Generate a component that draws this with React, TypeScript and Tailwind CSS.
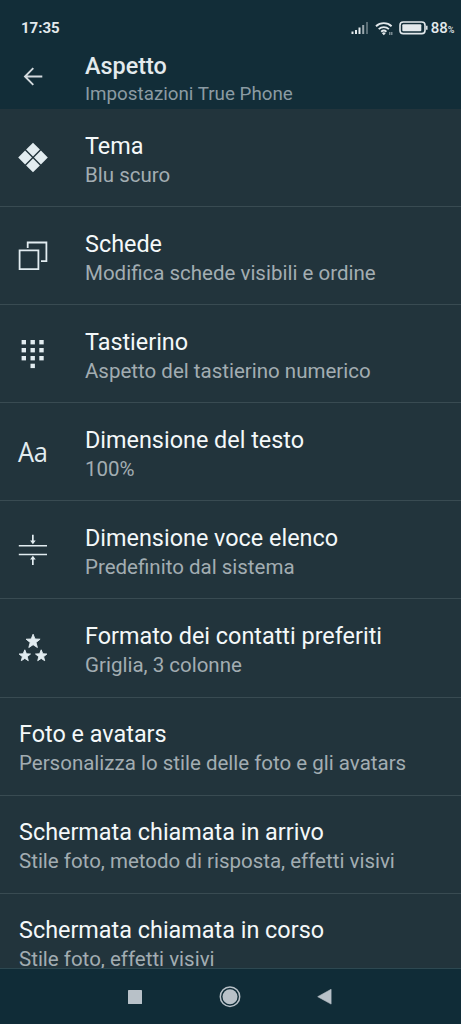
import React from 'react';

interface SettingItem {
  title: string;
  summary: string;
  icon?: React.ReactNode;
}

function ThemeIcon() {
  return (
    <svg width="32" height="32" viewBox="0 0 32 32" fill="currentColor">
      <path d="M16 .7l6.9 6.9-6.9 6.9-6.9-6.9zM8.1 8.6l6.9 6.9-6.9 6.9-6.9-6.9zM23.9 8.6l6.9 6.9-6.9 6.9-6.9-6.9zM16 16.5l6.9 6.9-6.9 6.9-6.9-6.9z" />
    </svg>
  );
}

function TabsIcon() {
  return (
    <svg width="32" height="32" viewBox="0 0 32 32" fill="none" stroke="currentColor" strokeWidth="1.8">
      <path d="M2.6 10.4h18.8v18.8H2.6z" />
      <path d="M10.7 8.1V2.5h18.7v18.7h-5.4" />
    </svg>
  );
}

function KeypadIcon() {
  return (
    <svg width="32" height="32" viewBox="0 0 32 32" fill="currentColor">
      {[4.6, 13.5, 22.3].map((x) =>
        [2, 10, 18].map((y) => <rect key={`${x}-${y}`} x={x} y={y} width="4.4" height="4.4" />)
      )}
      <rect x="13.5" y="25.7" width="4.4" height="4.4" />
    </svg>
  );
}

function RowHeightIcon() {
  return (
    <svg width="32" height="32" viewBox="0 0 32 32" fill="currentColor">
      <path d="M1.8 10.9h28.2v1.5H1.8zM1.8 19.8h28.2v1.5H1.8z" />
      <path d="M15 .8h1.7v5.8h2L15.9 10.2l-2.8-3.6H15zM15 31h1.7v-5.6h2L15.9 21.8l-2.8 3.6H15z" />
    </svg>
  );
}

function StarsIcon() {
  return (
    <svg width="32" height="32" viewBox="0 0 32 32" fill="currentColor" stroke="currentColor" strokeWidth=".9" strokeLinejoin="round">
      <path d="M16.1 2.2l1.9 4.8 5.1.2-4.1 3.3 1.4 5-4.3-2.8-4.3 2.8 1.4-5-4.1-3.3 5.1-.2z" />
      <path d="M7.8 17.8l1.6 4 4.1.2-3.3 2.7 1.1 4-3.5-2.3-3.5 2.3 1.1-4-3.3-2.7 4.1-.2z" />
      <path d="M24.2 17.8l1.6 4 4.1.2-3.3 2.7 1.1 4-3.5-2.3-3.5 2.3 1.1-4-3.3-2.7 4.1-.2z" />
    </svg>
  );
}

const items: SettingItem[] = [
  { title: 'Tema', summary: 'Blu scuro', icon: <ThemeIcon /> },
  { title: 'Schede', summary: 'Modifica schede visibili e ordine', icon: <TabsIcon /> },
  { title: 'Tastierino', summary: 'Aspetto del tastierino numerico', icon: <KeypadIcon /> },
  {
    title: 'Dimensione del testo',
    summary: '100%',
    icon: <span className="scale-x-[0.94] font-['Open_Sans',sans-serif] text-[27px] leading-8 tracking-[-0.3px]">Aa</span>,
  },
  { title: 'Dimensione voce elenco', summary: 'Predefinito dal sistema', icon: <RowHeightIcon /> },
  { title: 'Formato dei contatti preferiti', summary: 'Griglia, 3 colonne', icon: <StarsIcon /> },
  { title: 'Foto e avatars', summary: 'Personalizza lo stile delle foto e gli avatars' },
  { title: 'Schermata chiamata in arrivo', summary: 'Stile foto, metodo di risposta, effetti visivi' },
  { title: 'Schermata chiamata in corso', summary: 'Stile foto, effetti visivi' },
];

function StatusBar() {
  return (
    <div className="flex h-11 items-center justify-between pt-3 pr-[7px] pl-[21px] text-[#e3e9ec]">
      <span className="text-[15px] leading-4 font-bold">17:35</span>
      <div className="flex items-center">
        <svg width="18" height="14" viewBox="0 0 18 14" fill="currentColor">
          <path d="M.5 10.5h2V13h-2zM4 9h2v4H4zM7.5 6.5h2V13h-2z" />
          <path opacity=".65" d="M11.2 4h2v9h-2z" />
          <path opacity=".35" d="M15 1h2v12h-2z" />
        </svg>
        <svg className="ml-[6px]" width="19" height="15" viewBox="0 0 19 15" fill="none" stroke="currentColor" strokeWidth="1.9">
          <path d="M1 5.2a11.5 11.5 0 0 1 15.6 0M3.7 8.1a7.6 7.6 0 0 1 10.2 0M6.2 10.7a4 4 0 0 1 5.2 0" />
          <path d="M8.8 14.2l-1.9-2a2.8 2.8 0 0 1 3.8 0z" fill="currentColor" stroke="none" />
          <path d="M14.8 11v3M16.8 11v3" strokeWidth="1.2" opacity=".6" />
        </svg>
        <svg className="ml-[5px]" width="30" height="14" viewBox="0 0 30 14" fill="none">
          <rect x="1" y="1" width="25" height="11.6" rx="3.2" stroke="currentColor" strokeWidth="1.6" />
          <rect x="3.3" y="3.3" width="19" height="7" rx="1" fill="currentColor" />
          <path d="M27.8 4.8v4" stroke="currentColor" strokeWidth="1.5" />
        </svg>
        <span className="ml-[2px] text-[15px] leading-4 font-medium">88</span>
        <span className="pt-1 text-[9px] leading-3 font-medium tracking-[-0.5px]">%</span>
      </div>
    </div>
  );
}

function Header() {
  return (
    <header className="h-[109px] shrink-0 bg-[#122d38]">
      <StatusBar />
      <div className="flex h-[65px] items-center">
        <svg className="ml-[23px] w-5 shrink-0 text-[#d3dade]" height="20" viewBox="0 0 20 20" fill="none" stroke="currentColor" strokeWidth="1.9">
          <path d="M19.3 9.5H2M10.3 1.2L2 9.5l8.3 8.3" />
        </svg>
        <div className="ml-[42px] pt-[6px]">
          <h1 className="text-[23.4px] leading-7 font-medium text-[#e3eaed]">Aspetto</h1>
          <p className="text-[18.8px] leading-7 text-[#8b9ba3]">Impostazioni True Phone</p>
        </div>
      </div>
    </header>
  );
}

function SettingRow({ title, summary, icon }: SettingItem) {
  return (
    <li className="flex h-[98.1px] shrink-0 items-center border-b border-[#394b52] pl-[19px]">
      {icon && <div className="mr-[36px] -ml-[2px] flex w-8 shrink-0 justify-center text-[#e2ecf0]">{icon}</div>}
      <div className="pt-[5px] whitespace-nowrap">
        <h2 className="text-[23.4px] leading-[29px] text-[#f4f8f9]">{title}</h2>
        <p className="mt-[5px] mb-[5px] text-[20.5px] leading-[18px] text-[#a2adb2]">{summary}</p>
      </div>
    </li>
  );
}

function NavigationBar() {
  return (
    <nav className="flex h-[56px] shrink-0 items-center border-t border-[#2d4851] bg-[#102c37] text-[#b8c1c8]">
      <svg className="ml-[128px]" width="14" height="14" viewBox="0 0 14 14" fill="currentColor">
        <rect width="14" height="14" rx=".6" />
      </svg>
      <svg className="ml-[77px]" width="22" height="22" viewBox="0 0 22 22" fill="currentColor">
        <circle cx="11" cy="10.7" r="9.7" fill="none" stroke="currentColor" strokeWidth="1.5" />
        <circle cx="11" cy="10.7" r="7.5" />
      </svg>
      <svg className="ml-[76px]" width="15" height="16" viewBox="0 0 15 16" fill="currentColor">
        <path d="M14.1.3v14.8L.7 7.7z" stroke="currentColor" strokeWidth=".6" strokeLinejoin="round" />
      </svg>
    </nav>
  );
}

export default function App() {
  return (
    <div className="flex h-screen w-full flex-col overflow-hidden bg-[#22343c] font-[Roboto,sans-serif]">
      <Header />
      <ul className="flex min-h-0 flex-1 flex-col overflow-hidden">
        {items.map((item) => (
          <SettingRow key={item.title} {...item} />
        ))}
      </ul>
      <NavigationBar />
    </div>
  );
}
